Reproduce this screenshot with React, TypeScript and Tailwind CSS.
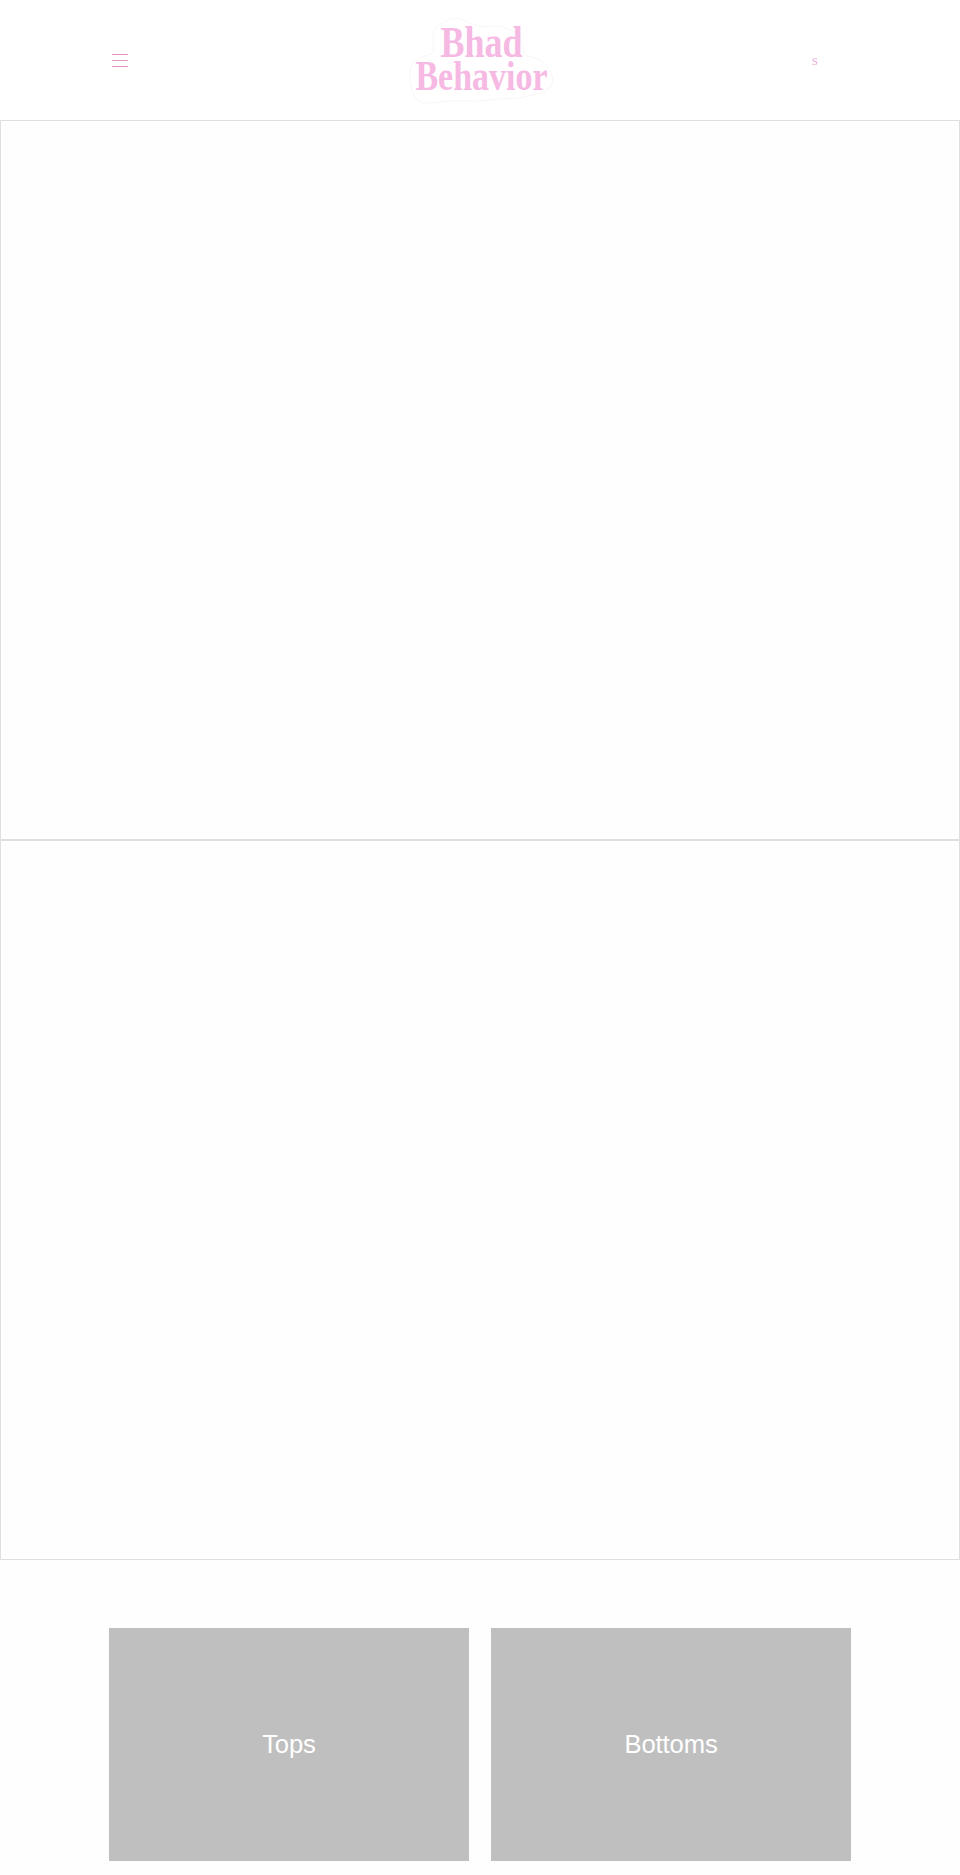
import React from "react";

function Logo() {
  return (
    <div className="relative ml-[10px] flex h-[100px] w-[190px] items-center justify-center pr-[7px]">
      {/* sticker edge behind the wordmark */}
      <svg viewBox="0 0 570 300" className="absolute inset-0 h-[100px] w-[190px]" fill="none">
        <path
          d="M140 50 C165 30 195 20 220 30 C250 45 275 55 300 48 C335 45 385 60 395 95 C402 115 395 130 410 138 C445 140 480 165 488 205 C490 240 455 250 425 255 C385 270 340 262 300 270 C250 278 200 268 150 276 C115 282 80 282 72 255 C62 235 55 205 62 175 C66 150 100 140 128 130 C135 105 120 70 140 50 Z"
          stroke="#f1f1f1"
          strokeWidth="2"
          fill="#ffffff"
        />
      </svg>
      <div className="relative flex origin-center scale-y-[1.22] flex-col items-center font-['Liberation_Serif',serif] font-bold text-[#f6b9e3]">
        <span className="text-[36px] leading-[27px]">Bhad</span>
        <span className="text-[34px] leading-[28px]">Behavior</span>
      </div>
    </div>
  );
}

function Header() {
  return (
    <header className="grid h-[120px] grid-cols-3 items-center bg-white px-[109px]">
      <button className="flex w-[22px] flex-col items-center gap-[5px] justify-self-start">
        <span className="h-px w-[16px] bg-[#e493c9]" />
        <span className="h-px w-[16px] bg-[#dc9fc8]" />
        <span className="h-px w-[16px] bg-[#e493c9]" />
      </button>
      <div className="flex justify-center">
        <Logo />
      </div>
      <div className="flex justify-end pt-[2px] pr-[33px]">
        <span className="font-['Liberation_Serif',serif] text-[11px] leading-none text-[#e9a9d4]">S</span>
      </div>
    </header>
  );
}

function Frame() {
  return <div className="h-[720px] border border-[#dedede] bg-[#fefefe]" />;
}

function Card({ label }: { label: string }) {
  return (
    <a className="flex h-[233px] items-center justify-center bg-[#bfbfbf] text-[25.6px] tracking-[-0.1px] text-white">
      {label}
    </a>
  );
}

export default function App() {
  return (
    <div className="min-h-[1875px] bg-[#fefefe] font-['Liberation_Sans',Arial,sans-serif]">
      <Header />
      <Frame />
      <Frame />
      <section className="grid grid-cols-2 gap-[22px] px-[109px] pt-[68px] pb-[15px]">
        <Card label="Tops" />
        <Card label="Bottoms" />
      </section>
    </div>
  );
}
